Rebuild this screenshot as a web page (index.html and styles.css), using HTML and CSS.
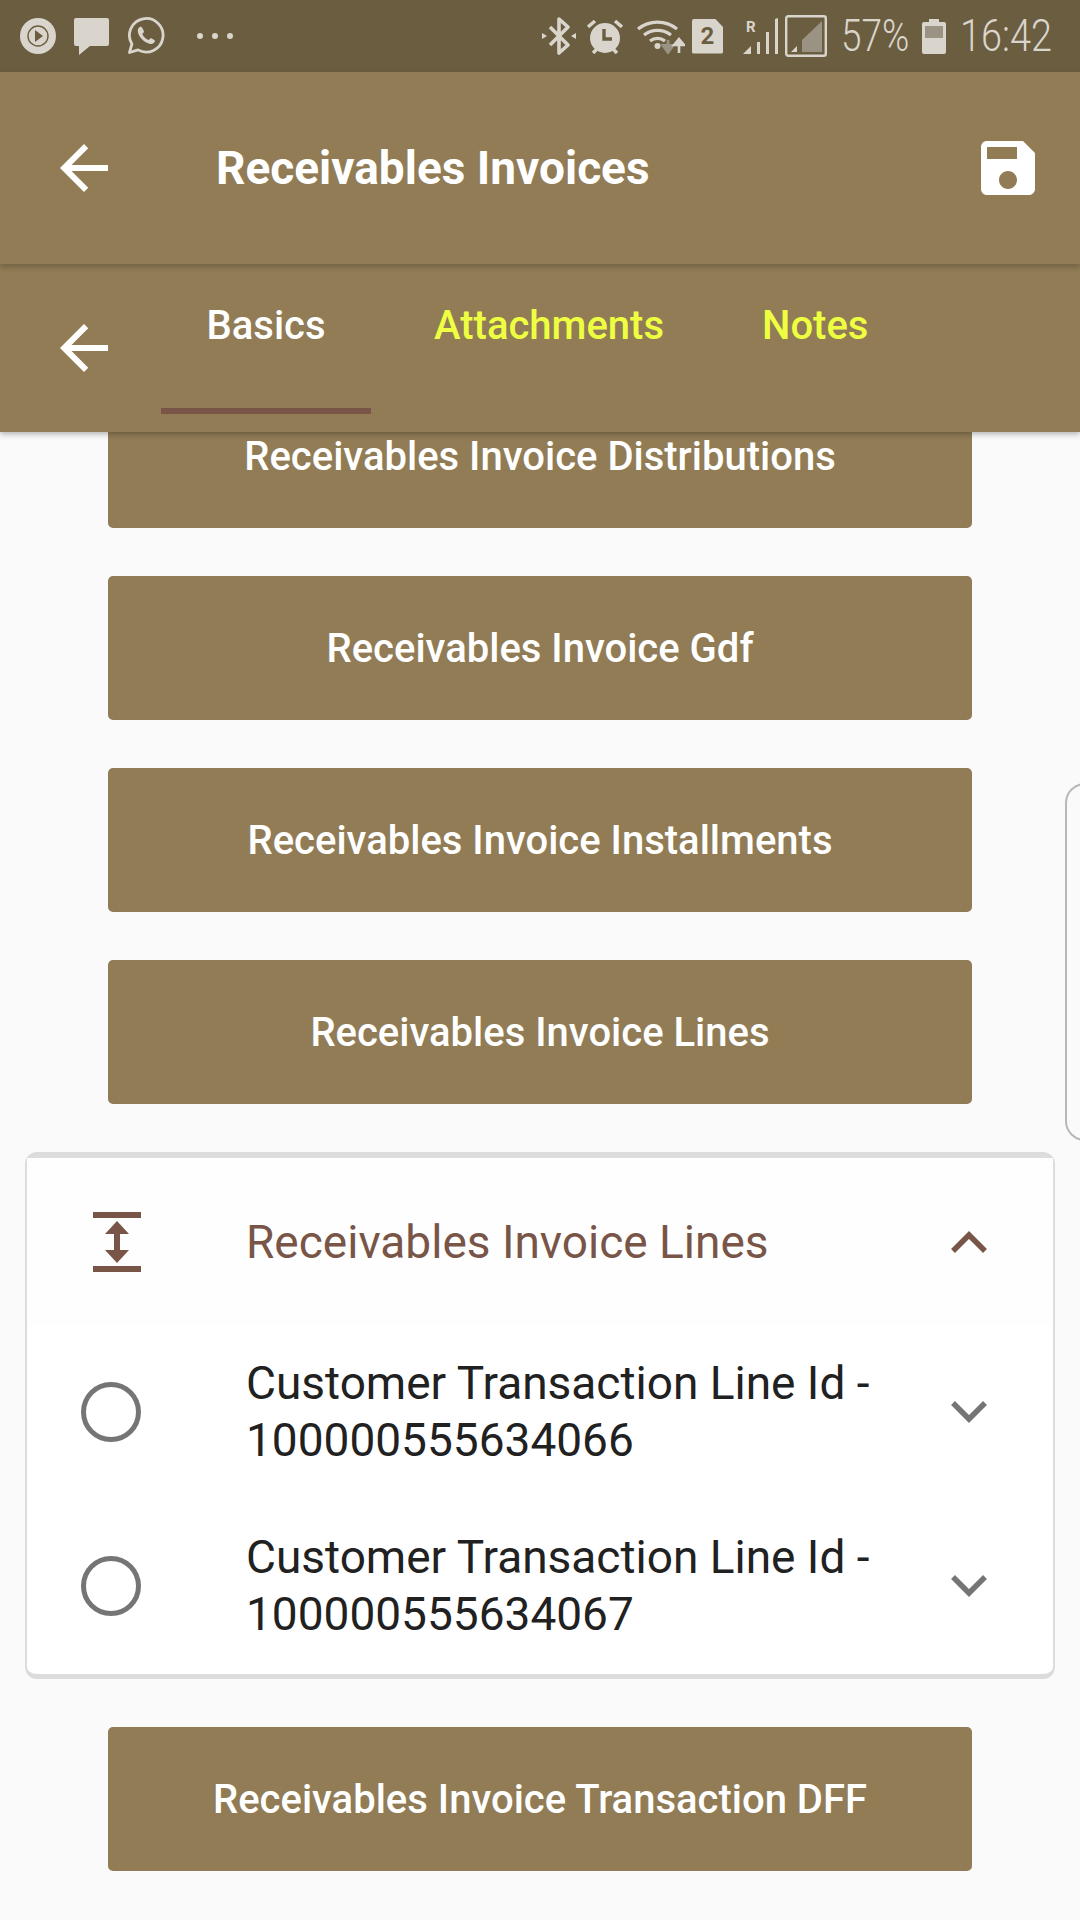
FILE: index.html
```html
<!DOCTYPE html>
<html lang="en">
<head>
<meta charset="utf-8">
<title>Receivables Invoices</title>
<link rel="stylesheet" href="styles.css">
</head>
<body>
<div class="screen">
  <header class="header">
    <div class="status">
      <div class="status-left">
        <svg class="si" width="36" height="36" viewBox="0 0 36 36"><circle cx="18" cy="18" r="18" fill="#d9d5cc"/><circle cx="18" cy="18" r="10" fill="none" stroke="#6b5d40" stroke-width="1.4"/><path d="M15 12l8 6-8 6z" fill="#6b5d40"/></svg>
        <svg class="si chat" width="35" height="37" viewBox="0 0 35 37"><path d="M2 0h31a2 2 0 0 1 2 2v24a2 2 0 0 1-2 2H16L5 37v-9H2a2 2 0 0 1-2-2V2a2 2 0 0 1 2-2z" fill="#d9d5cc"/></svg>
        <svg class="si wa" width="38" height="38" viewBox="0 0 38 38"><path d="M2.5 35.500l2.400-8.500A16.800 16.800 0 1 1 11 32.900z" fill="none" stroke="#d9d5cc" stroke-width="2.800" stroke-linejoin="round"/><path d="M13.500 9.500c-1.500.6-3 2.400-2.700 5 .6 5 6.500 11.500 12.500 12.400 2.500.4 4.400-1.300 4.700-3 .1-.7-3.900-2.900-4.500-2.600-.9.500-1.200 1.700-2.200 1.600-1.800-.3-5.300-3.700-5.800-5.600-.2-.9 1.200-1.500 1.500-2.300.2-.7-1.900-5.400-3.500-5.500z" fill="#d9d5cc"/></svg>
        <div class="dots"><span class="dot"></span><span class="dot"></span><span class="dot"></span></div>
      </div>
      <div class="status-right">
        <svg class="si" width="34" height="38" viewBox="0 0 34 38"><path d="M8 10l18 18-9 8V2l9 8L8 28" fill="none" stroke="#d9d5cc" stroke-width="3.600" stroke-linejoin="round"/><path d="M0 16l5 3-5 3zM34 16l-5 3 5 3z" fill="#d9d5cc"/></svg>
        <svg class="si alarm" width="36" height="36" viewBox="0 0 36 36"><circle cx="18" cy="20" r="15" fill="#d9d5cc"/><path d="M1 9l7-6M35 9l-7-6M6 35l4-4M30 35l-4-4" stroke="#d9d5cc" stroke-width="3.500" fill="none"/><path d="M17 11v10h8" stroke="#6b5d40" stroke-width="3.400" fill="none"/></svg>
        <svg class="si wifi" width="48" height="36" viewBox="0 0 48 36"><path d="M1 11a31 31 0 0 1 39 0M7 17a22 22 0 0 1 27 0M13 23a12 12 0 0 1 15 0" fill="none" stroke="#d9d5cc" stroke-width="3.200"/><circle cx="20.500" cy="28" r="3" fill="#d9d5cc"/><path d="M31 22v10M26 27.500l5 7 5-7z" stroke="#9a9282" stroke-width="2.800" fill="#9a9282"/><path d="M42 35V24M37 27l5-6 5 6z" stroke="#d9d5cc" stroke-width="2.600" fill="#d9d5cc"/></svg>
        <span class="sim"><span class="sim-num">2</span></span>
        <svg class="si signal" width="35" height="36" viewBox="0 0 35 36"><path d="M0 36l8-8v8z" fill="#d9d5cc"/><path d="M14 36V24h3v12zM23 36V14h3v22zM32 36V1l3-1v36z" fill="#d9d5cc"/><text class="rtag" x="3" y="14">R</text></svg>
        <svg class="si box" width="42" height="42" viewBox="0 0 42 42"><rect x="1.200" y="1.200" width="39.600" height="39.600" rx="2" fill="none" stroke="#d9d5cc" stroke-width="2.400"/><path d="M6 37l6-6v6z" fill="#d9d5cc"/><path d="M17 37V25L37 6v31z" fill="#9a9282"/></svg>
        <span class="stext pct">57%</span>
        <svg class="si batt" width="24" height="35" viewBox="0 0 24 35"><path d="M7 0h10v3h5a2 2 0 0 1 2 2v28a2 2 0 0 1-2 2H2a2 2 0 0 1-2-2V5a2 2 0 0 1 2-2h5z" fill="#d9d5cc"/><rect x="3" y="7" width="18" height="12" fill="#9a9282"/></svg>
        <span class="stext clock">16:42</span>
      </div>
    </div>
    <div class="appbar">
      <svg class="icon72" viewBox="0 0 24 24"><path d="M20 11H7.830l5.590-5.590L12 4l-8 8 8 8 1.410-1.410L7.830 13H20v-2z" fill="#fff"/></svg>
      <div class="title">Receivables Invoices</div>
      <svg class="icon72" viewBox="0 0 24 24"><path d="M17 3H5c-1.110 0-2 .9-2 2v14c0 1.100.89 2 2 2h14c1.100 0 2-.9 2-2V7l-4-4zm-5 16c-1.660 0-3-1.340-3-3s1.340-3 3-3 3 1.340 3 3-1.340 3-3 3zm3-10H5V5h10v4z" fill="#fff"/></svg>
    </div>
    <div class="tabbar">
      <svg class="icon72" viewBox="0 0 24 24"><path d="M20 11H7.830l5.590-5.590L12 4l-8 8 8 8 1.410-1.410L7.830 13H20v-2z" fill="#fff"/></svg>
      <nav class="tabs">
        <div class="tab tab-active">Basics</div>
        <div class="tab">Attachments</div>
        <div class="tab">Notes</div>
      </nav>
    </div>
  </header>
  <main class="content">
    <div class="btn btn-first">Receivables Invoice Distributions</div>
    <div class="btn">Receivables Invoice Gdf</div>
    <div class="btn">Receivables Invoice Installments</div>
    <div class="btn">Receivables Invoice Lines</div>
    <section class="card">
      <div class="card-head">
        <svg class="lead" width="60" height="60" viewBox="0 0 60 60" style="color:#795548"><path d="M6 0h48v6H6zM6 54h48v6H6z" fill="currentColor"/><path d="M30 9l12 13H33v16h9L30 51 18 38h9V22h-9z" fill="currentColor"/></svg>
        <div class="head-text">Receivables Invoice Lines</div>
        <svg class="chev" width="36" height="22" viewBox="0 0 36 22"><path d="M2 20L18 4l16 16" fill="none" stroke="#795548" stroke-width="5.500"/></svg>
      </div>
      <div class="row">
        <span class="radio"></span>
        <div class="row-text">Customer Transaction Line Id - 100000555634066</div>
        <svg class="chev" width="36" height="22" viewBox="0 0 36 22"><path d="M2 2l16 16L34 2" fill="none" stroke="#757575" stroke-width="5.500"/></svg>
      </div>
      <div class="row">
        <span class="radio"></span>
        <div class="row-text">Customer Transaction Line Id - 100000555634067</div>
        <svg class="chev" width="36" height="22" viewBox="0 0 36 22"><path d="M2 2l16 16L34 2" fill="none" stroke="#757575" stroke-width="5.500"/></svg>
      </div>
    </section>
    <div class="btn">Receivables Invoice Transaction DFF</div>
    <div class="peek"></div>
  </main>
</div>
</body>
</html>
```

FILE: styles.css
```css
* { box-sizing: border-box; }
html, body { margin: 0; padding: 0; }
body { font-family: Roboto, "Liberation Sans", sans-serif; background: #fafafa; }
.screen { width: 1080px; height: 1920px; overflow: hidden; display: flex; flex-direction: column; background: #fafafa; }

.header { position: relative; z-index: 2; flex: none; box-shadow: 0 2px 6px rgba(0,0,0,.3); }
.status { height: 72px; background: #6b5d40; display: flex; justify-content: space-between; align-items: center; padding: 0 24px 0 20px; color: #d9d5cc; }
.status-left, .status-right { display: flex; align-items: center; }
.si { display: block; flex: none; }
.chat { margin-left: 18px; margin-top: 1px; }
.wa { margin-left: 18px; }
.dots { display: flex; gap: 9px; margin-left: 32px; }
.dot { width: 6px; height: 6px; border-radius: 50%; background: #d9d5cc; }
.alarm { margin-left: 11px; }
.wifi { margin-left: 14px; }
.sim { margin-left: 7px; width: 31px; height: 35px; background: #d9d5cc; border-radius: 2px 8px 2px 2px; clip-path: polygon(0 0, 74% 0, 100% 24%, 100% 100%, 0 100%); display: flex; align-items: center; justify-content: center; }
.sim-num { color: #6b5d40; font-size: 24px; font-weight: 700; line-height: 1; }
.signal { margin-left: 20px; }
.rtag { font: 700 15px Roboto, sans-serif; fill: #d9d5cc; }
.box { margin-left: 7px; }
.stext { font-weight: 300; font-size: 44px; line-height: 1; color: #d9d5cc; display: inline-block; }
.pct { width: 67px; margin-left: 14px; transform: scaleX(.84); transform-origin: left center; white-space: nowrap; }
.batt { margin-left: 14px; }
.clock { width: 96px; margin-left: 14px; transform: scaleX(.86); transform-origin: left center; white-space: nowrap; }

.appbar { height: 192px; background: #917c56; display: flex; align-items: center; padding: 0 36px 0 48px; box-shadow: 0 3px 6px rgba(0,0,0,.22); position: relative; z-index: 1; }
.icon72 { width: 72px; height: 72px; flex: none; display: block; }
.title { flex: 1; margin-left: 96px; font-size: 46px; font-weight: 700; color: #fff; }
.tabbar { height: 168px; background: #917c56; display: flex; align-items: center; padding-left: 48px; }
.tabs { display: flex; align-self: stretch; margin-left: 41px; }
.tab { padding: 0 49px; height: 150px; padding-top: 38px; line-height: 48px; font-size: 40px; font-weight: 500; color: #eeff41; white-space: nowrap; }
.tab-active { padding: 38px 45.5px 0; margin-right: 14px; color: #fff; border-bottom: 6px solid #795548; }

.content { flex: 1; display: flex; flex-direction: column; padding: 0 25px; position: relative; z-index: 1; }
.btn { margin: 0 83px 48px; height: 144px; background: #917c56; border-radius: 5px; display: flex; align-items: center; justify-content: center; color: #fff; font-size: 40px; font-weight: 500; white-space: nowrap; }
.btn-first { margin-top: -48px; }

.card { width: 1030px; height: 527px; margin-bottom: 48px; background: #fff; border-style: solid; border-color: #dcdcdc; border-width: 6px 2px 5px; border-radius: 12px; display: flex; flex-direction: column; }
.card-head { height: 167px; flex: none; display: flex; align-items: center; padding: 0 66px 0 60px; background: #fefefe; }
.lead { flex: none; margin-left: 0; }
.head-text { flex: 1; margin-left: 99px; font-size: 46px; color: #795548; white-space: nowrap; }
.row { height: 174px; flex: none; display: flex; align-items: center; padding: 0 66px 0 54px; }
.radio { flex: none; width: 60px; height: 60px; border-radius: 50%; border: 5.500px solid #757575; }
.row-text { flex: 1; margin-left: 105px; margin-right: 60px; font-size: 46px; line-height: 57px; color: #212121; }
.chev { flex: none; }

.peek { position: absolute; left: 1065px; top: 351px; width: 60px; height: 358px; border: 2px solid #b8b8b8; border-radius: 20px; background: #fafafa; }
```
